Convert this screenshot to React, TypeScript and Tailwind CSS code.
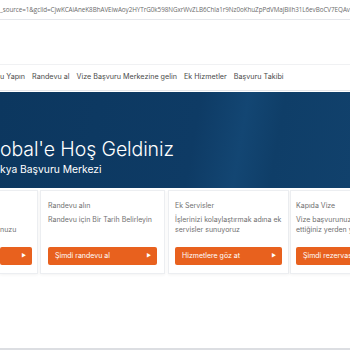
const url =
  "_source=1&gclid=CjwKCAiAneK8BhAVEiwAoy2HYTrG0k598NGxrWvZLB6Chla1r9Nz0oKhuZpPdVMajBilh31L6evBoCV7EQAvD_BwE";

const navItems = ["u Yapın", "Randevu al", "Vize Başvuru Merkezine gelin", "Ek Hizmetler", "Başvuru Takibi"];

const cards = [
  { title: "", lines: ["", "nuzu"], button: "", size: "w-[38px] pl-0 pr-[5px] border-l-0" },
  { title: "Randevu alın", lines: ["Randevu için Bir Tarih Belirleyin"], button: "Şimdi randevu al", size: "w-[125px] px-[7px] ml-[2px]" },
  { title: "Ek Servisler", lines: ["İşlerinizi kolaylaştırmak adına ek", "servisler sunuyoruz"], button: "Hizmetlere göz at", size: "w-[121px] px-[6px] ml-[3px]" },
  { title: "Kapıda Vize", lines: ["Vize başvurunuzu talep", "ettiğiniz yerden yapın"], button: "Şimdi rezervasyon yap", size: "w-[125px] px-[5px] ml-[1px]" },
];

function Card({ title, lines, button, size }: { title: string; lines: string[]; button: string; size: string }) {
  return (
    <div
      className={
        "shrink-0 flex flex-col bg-white border border-[#eceef1] shadow-[0_1px_3px_rgba(0,0,0,0.05)] pt-[10px] pb-[8px] " + size
      }
    >
      <div className="h-[10px] text-[7px] leading-[10px] text-[#707070] whitespace-nowrap">{title}</div>
      <div className="mt-[4px] h-[26px] text-[7px] leading-[10px] text-[#707070] whitespace-nowrap">
        {lines.map((l, i) => (
          <div key={i} className="h-[10px]">{l}</div>
        ))}
      </div>
      <div className="mt-[6px] h-[18px] rounded-[2px] bg-[#e8611e] flex items-center justify-between pl-[7px] pr-[6px] text-white text-[7px]">
        <span className="whitespace-nowrap">{button}</span>
        <span className="text-[5px]">▶</span>
      </div>
    </div>
  );
}

export default function App() {
  return (
    <div className="w-[350px] h-[350px] overflow-hidden bg-white relative font-['Inter',sans-serif]">
      <div className="h-[20px] border-b border-[#e5e7eb] flex items-center overflow-hidden">
        <span className="whitespace-nowrap text-[6.3px] text-[#6b6b6b] font-['Open_Sans',sans-serif] tracking-[-0.05px]">{url}</span>
      </div>
      <div className="h-[45px] border-b border-[#f0f1f3]" />
      <nav className="h-[26px] border-b border-[#e4e6ea] flex items-center gap-[7px] text-[7.2px] text-[#4a4a4a] whitespace-nowrap">
        {navItems.map((n) => (
          <span key={n}>{n}</span>
        ))}
      </nav>
      <section className="mt-[1px] h-[96px] bg-[linear-gradient(100deg,#0c375f_0%,#0e3b65_55%,#134673_68%,#0f3e68_78%,#11416c_100%)] flex flex-col justify-end pb-[13px]">
        <h1 className="text-white text-[19.5px] leading-[24px] font-light tracking-[-0.1px]">obal'e Hoş Geldiniz</h1>
        <p className="text-white text-[10.3px] leading-[12px] mt-[2px]">kya Başvuru Merkezi</p>
      </section>
      <div className="flex mt-[2px]">
        {cards.map((c, i) => (
          <Card key={i} {...c} />
        ))}
      </div>
      <div className="absolute left-0 right-0 bottom-0 h-[2px] bg-[#dcdee2]" />
    </div>
  );
}
